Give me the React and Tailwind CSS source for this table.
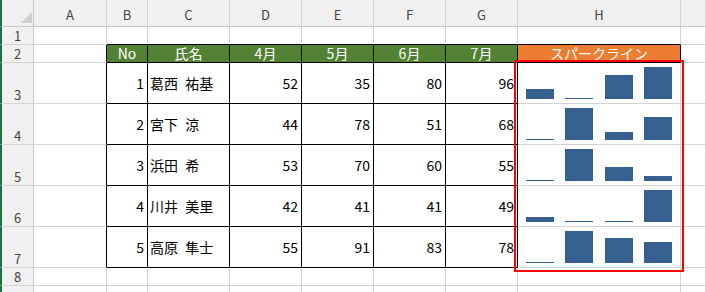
import React from "react";

const data = [
  [1, "葛西 祐基", 52, 35, 80, 96],
  [2, "宮下 涼", 44, 78, 51, 68],
  [3, "浜田 希", 53, 70, 60, 55],
  [4, "川井 美里", 42, 41, 41, 49],
  [5, "高原 隼士", 55, 91, 83, 78],
];

const letters = ["A", "B", "C", "D", "E", "F", "G", "H", ""];

function RowHead({ label }) {
  return (
    <div className="flex items-end justify-center border-l-2 border-l-[#1e7145] border-r border-b border-r-[#c8c8c8] border-b-[#d4d4d4] bg-[#f0f0f0] pb-[1px] text-[13px] leading-[15px] text-[#444]">
      {label}
    </div>
  );
}

function Spark({ vals }) {
  const min = Math.min(...vals);
  const max = Math.max(...vals);
  return (
    <div className="flex items-end justify-between border-r border-b border-[#d4d4d4] px-[8px] pt-[4px] pb-[4px]">
      {vals.map((v, i) => (
        <div
          key={i}
          className="w-[28px] bg-[#36608f]"
          style={{ height: `${1.5 + ((v - min) / (max - min)) * 30.5}px` }}
        />
      ))}
    </div>
  );
}

export default function App() {
  return (
    <div className="relative h-[292px] w-[706px] overflow-hidden bg-white font-['Noto_Sans_CJK_JP','Liberation_Sans',sans-serif] text-black">
      <div className="grid grid-cols-[34px_73px_41px_82px_72px_72px_72px_72px_163px_1fr] grid-rows-[27px_18px_18px_41px_41px_41px_41px_41px_18px_18px]">
        {/* header row */}
        <div className="flex items-end justify-end border-l-2 border-l-[#1e7145] border-r border-b border-r-[#c8c8c8] border-b-[#c8c8c8] bg-[#f0f0f0] pr-[1px] pb-[3px]">
          <svg width="11" height="11" viewBox="0 0 11 11">
            <polygon points="11,0 11,11 0,11" fill="#d0d0d0" />
          </svg>
        </div>
        {letters.map((l, i) => (
          <div
            key={i}
            className="flex items-end justify-center border-r border-b border-r-[#d4d4d4] border-b-[#c8c8c8] bg-[#f0f0f0] pb-[3px] text-[13px] leading-[16px] text-[#444]"
          >
            {l}
          </div>
        ))}

        {/* row 1 */}
        <RowHead label="1" />
        <div className="border-r border-b border-[#d4d4d4]" />
        {[0, 1, 2, 3, 4, 5, 6].map((i) => (
          <div key={i} className="border-r border-b border-r-[#d4d4d4] border-b-black" />
        ))}
        <div className="border-r border-b border-[#d4d4d4]" />

        {/* row 2 */}
        <RowHead label="2" />
        <div className="border-r border-b border-r-black border-b-[#d4d4d4]" />
        {["No", "氏名", "4月", "5月", "6月", "7月"].map((t) => (
          <div
            key={t}
            className="flex items-center justify-center border-r border-b border-black bg-[#548235] text-[14px] leading-[17px] text-white"
          >
            {t}
          </div>
        ))}
        <div className="flex items-center justify-center border-r border-b border-black bg-[#ed7d31] text-[14px] leading-[17px] text-white">
          スパークライン
        </div>
        <div className="border-r border-b border-[#d4d4d4]" />

        {/* data rows */}
        {data.map((r, ri) => (
          <React.Fragment key={ri}>
            <RowHead label={String(ri + 3)} />
            <div className="border-r border-b border-r-black border-b-[#d4d4d4]" />
            <div className="flex items-center justify-end border-r border-b border-black pr-[3px] text-[14px]">
              {r[0]}
            </div>
            <div className="flex items-center border-r border-b border-black pl-[2px] text-[14px] [word-spacing:4px]">
              {r[1]}
            </div>
            {r.slice(2).map((v, i) => (
              <div
                key={i}
                className="flex items-center justify-end border-r border-b border-black pr-[3px] text-[14px]"
              >
                {v}
              </div>
            ))}
            <Spark vals={r.slice(2)} />
            <div className="border-r border-b border-[#d4d4d4]" />
          </React.Fragment>
        ))}

        {/* row 8 */}
        <RowHead label="8" />
        {letters.map((l, i) => (
          <div key={i} className="border-r border-b border-[#d4d4d4]" />
        ))}

        {/* row 9 (partially visible) */}
        <RowHead label="" />
        {letters.map((l, i) => (
          <div key={i} className="border-r border-b border-[#d4d4d4]" />
        ))}
      </div>

      {/* selection highlight */}
      <div className="pointer-events-none absolute left-[514px] top-[60px] h-[212px] w-[170px] border-2 border-[#ff0000]" />
    </div>
  );
}
